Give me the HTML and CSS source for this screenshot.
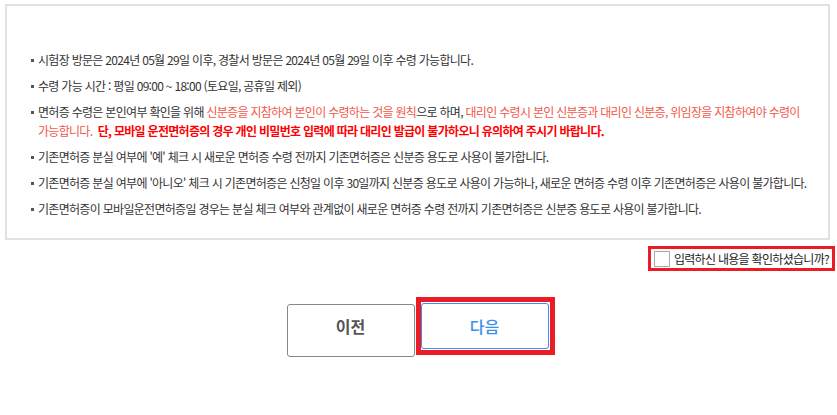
FILE: index.html
```html
<!DOCTYPE html>
<html lang="ko">

<head>
    <meta charset="UTF-8">
    <meta name="viewport" content="width=device-width, initial-scale=1.0">
    <title>면허증 수령 안내</title>
    <link rel="stylesheet" href="styles.css">
</head>

<body>

    <div id="wrap">
        <div class="notice">
            <ul class="notice-list">
                <li>시험장 방문은 2024년 05월 29일 이후, 경찰서 방문은 2024년 05월 29일 이후 수령 가능합니다.</li>
                <li>수령 가능 시간 : 평일 09:00 ~ 18:00 (토요일, 공휴일 제외)</li>
                <li>면허증 수령은 본인여부 확인을 위해 <span class="soft">신분증을 지참하여 본인이 수령하는 것을 원칙</span>으로 하며, <span class="soft">대리인 수령시 본인 신분증과 대리인 신분증, 위임장을 지참하여야 수령이 가능합니다.</span>&nbsp; <strong class="strong">단, 모바일 운전면허증의 경우 개인 비밀번호 입력에 따라 대리인 발급이 불가하오니 유의하여 주시기 바랍니다.</strong></li>
                <li>기존면허증 분실 여부에 '예' 체크 시 새로운 면허증 수령 전까지 기존면허증은 신분증 용도로 사용이 불가합니다.</li>
                <li>기존면허증 분실 여부에 '아니오' 체크 시 기존면허증은 신청일 이후 30일까지 신분증 용도로 사용이 가능하나, 새로운 면허증 수령 이후 기존면허증은 사용이 불가합니다.</li>
                <li>기존면허증이 모바일운전면허증일 경우는 분실 체크 여부와 관계없이 새로운 면허증 수령 전까지 기존면허증은 신분증 용도로 사용이 불가합니다.</li>
            </ul>
        </div>

        <div class="confirm-row">
            <label class="confirm">
                <input type="checkbox" id="agree">
                <span class="box"></span>
                입력하신 내용을 확인하셨습니까?
            </label>
        </div>

        <div class="btn-row">
            <button class="btn btn-prev" type="button">이전</button>
            <span class="mark">
                <button class="btn btn-next" type="button">다음</button>
            </span>
        </div>
    </div>

</body>

</html>
```

FILE: styles.css
```css
* {
    box-sizing: border-box;
}

body {
    margin: 0;
    background: #fff;
    font-family: "Noto Sans CJK KR", "Noto Sans", sans-serif;
    color: #333;
}

#wrap {
    padding: 4px 7px 0 5px;
}

.notice {
    border: 2px solid #e2e2e2;
    height: 236px;
    padding: 44px 20px 0 19px;
}

.notice-list {
    margin: 0;
    padding: 0;
    list-style: none;
    font-size: 12px;
    line-height: 19px;
    letter-spacing: -0.7px;
    word-break: keep-all;
}

.notice-list li {
    position: relative;
    padding-left: 12px;
    margin-bottom: 7px;
}

.notice-list li::before {
    content: "";
    position: absolute;
    left: 5px;
    top: 9px;
    width: 3px;
    height: 3px;
    background: #555;
}

.soft {
    color: #f2584a;
}

.strong {
    color: #f00;
    font-weight: bold;
}

.confirm-row {
    display: flex;
    justify-content: flex-end;
    margin-top: 6px;
    margin-right: -5px;
}

.confirm {
    display: flex;
    align-items: center;
    gap: 4px;
    border: 3px solid #ec1c24;
    height: 25px;
    padding: 0 3px 0 3px;
    font-size: 12px;
    color: #222;
    letter-spacing: -0.7px;
    cursor: pointer;
}

.confirm input {
    display: none;
}

.confirm .box {
    width: 16px;
    height: 16px;
    border: 1px solid #aaa;
    background: #fff;
}

.btn-row {
    display: flex;
    justify-content: center;
    align-items: flex-start;
    margin-top: 26px;
    padding-left: 6px;
}

.btn {
    width: 128px;
    background: #fff;
    border-radius: 3px;
    font-family: inherit;
    font-size: 16px;
    font-weight: bold;
    cursor: pointer;
}

.btn-prev {
    height: 53px;
    margin-top: 7px;
    margin-right: 1px;
    padding-bottom: 10px;
    border: 1px solid #888;
    color: #555;
}

.mark {
    display: block;
    border: 5px solid #ec1c24;
    padding: 1px 1px 1px 0;
}

.btn-next {
    display: block;
    height: 46px;
    border: 1px solid #3d8ef5;
    color: #3a8ef0;
    font-weight: 500;
}
```
